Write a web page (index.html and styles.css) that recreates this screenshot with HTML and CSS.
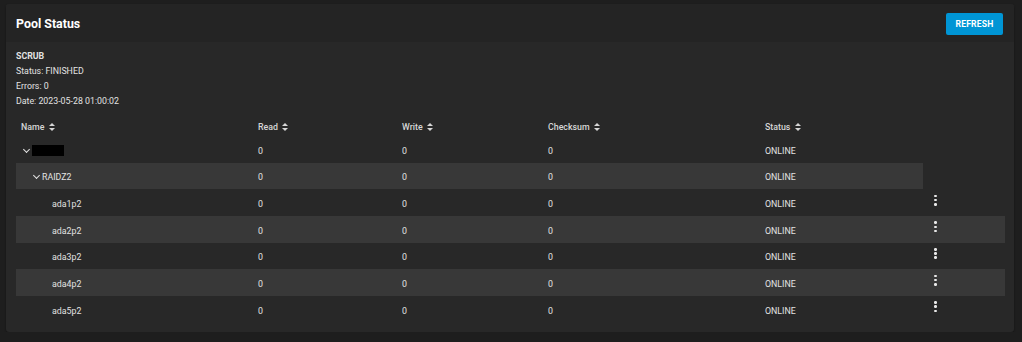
FILE: index.html
```html
<!DOCTYPE html>
<html>
<head>
<meta charset="utf-8">
<link rel="stylesheet" href="styles.css">
</head>
<body>
<div class="card">
  <div class="card-header">
    <h1 class="title">Pool Status</h1>
    <button class="btn">REFRESH</button>
  </div>
  <div class="card-body">
    <div class="scrub">
      <div class="scrub-title">SCRUB</div>
      <div>Status: FINISHED</div>
      <div>Errors: 0</div>
      <div>Date: 2023-05-28 01:00:02</div>
    </div>
    <table class="grid">
      <colgroup>
        <col class="c-name"><col class="c-read"><col class="c-write"><col class="c-sum"><col class="c-status"><col class="c-act">
      </colgroup>
      <thead>
        <tr>
          <th>Name <span class="sort"></span></th>
          <th>Read <span class="sort"></span></th>
          <th>Write <span class="sort"></span></th>
          <th>Checksum <span class="sort"></span></th>
          <th>Status <span class="sort"></span></th>
          <th></th>
        </tr>
      </thead>
      <tbody>
        <tr>
          <td><div class="name lvl0"><span class="chev"></span><span class="redact"></span></div></td>
          <td>0</td><td>0</td><td>0</td><td>ONLINE</td><td></td>
        </tr>
        <tr class="stripe">
          <td><div class="name lvl1"><span class="chev"></span>RAIDZ2</div></td>
          <td>0</td><td>0</td><td>0</td><td>ONLINE</td>
        </tr>
        <tr>
          <td><div class="name lvl2">ada1p2</div></td>
          <td>0</td><td>0</td><td>0</td><td>ONLINE</td><td><span class="dots"><i></i><i></i><i></i></span></td>
        </tr>
        <tr class="stripe">
          <td><div class="name lvl2">ada2p2</div></td>
          <td>0</td><td>0</td><td>0</td><td>ONLINE</td><td><span class="dots"><i></i><i></i><i></i></span></td>
        </tr>
        <tr>
          <td><div class="name lvl2">ada3p2</div></td>
          <td>0</td><td>0</td><td>0</td><td>ONLINE</td><td><span class="dots"><i></i><i></i><i></i></span></td>
        </tr>
        <tr class="stripe">
          <td><div class="name lvl2">ada4p2</div></td>
          <td>0</td><td>0</td><td>0</td><td>ONLINE</td><td><span class="dots"><i></i><i></i><i></i></span></td>
        </tr>
        <tr>
          <td><div class="name lvl2">ada5p2</div></td>
          <td>0</td><td>0</td><td>0</td><td>ONLINE</td><td><span class="dots"><i></i><i></i><i></i></span></td>
        </tr>
      </tbody>
    </table>
  </div>
</div>
</body>
</html>
```
FILE: styles.css
```css
html, body {
  margin: 0;
  padding: 0;
  background: #1e1e1e;
  font-family: Roboto, "Liberation Sans", sans-serif;
  color: #e2e2e2;
}
body {
  padding: 4px 8px 0 6px;
}
.card {
  background: #282828;
  border-radius: 3px;
  overflow: hidden;
  box-shadow: 0 1px 2px rgba(0,0,0,0.4);
}
.card-header {
  background: #242424;
  height: 38px;
  display: flex;
  align-items: center;
  justify-content: space-between;
  padding: 0 11px 0 10px;
}
.title {
  margin: 0;
  font-size: 12.4px;
  font-weight: 700;
  color: #ffffff;
  padding-top: 1px;
}
.btn {
  background: #0095d5;
  color: #fff;
  border: none;
  border-radius: 2px;
  width: 57px;
  height: 22px;
  font-family: Roboto, "Liberation Sans", sans-serif;
  font-size: 8.6px;
  font-weight: 700;
  letter-spacing: 0.2px;
  padding: 0;
  margin-top: 2px;
}
.card-body {
  padding: 7px 9px 9px 10px;
}
.scrub {
  font-size: 8.8px;
  line-height: 15px;
  color: #e2e2e2;
}
.scrub-title {
  font-weight: 700;
}
.grid {
  margin-top: 9px;
  width: 989px;
  table-layout: fixed;
  border-collapse: collapse;
  font-size: 8.8px;
}
.c-name { width: 237px; }
.c-read { width: 144px; }
.c-write { width: 146px; }
.c-sum { width: 217px; }
.c-status { width: 163px; }
.c-act { width: 82px; }
.grid th {
  height: 18px;
  padding: 0 0 0 5px;
  text-align: left;
  font-weight: 500;
  color: #d6d6d6;
  vertical-align: middle;
}
.grid td {
  height: 26.67px;
  box-sizing: border-box;
  padding: 3px 0 0 5px;
  vertical-align: middle;
  color: #e2e2e2;
}
.stripe td {
  background: #383838;
}
.sort {
  display: inline-block;
  position: relative;
  width: 6px;
  height: 8px;
  margin-left: 2px;
  vertical-align: -1px;
}
.sort::before, .sort::after {
  content: "";
  position: absolute;
  left: 0;
  border-left: 3px solid transparent;
  border-right: 3px solid transparent;
}
.sort::before {
  top: 0;
  border-bottom: 3.5px solid #d6d6d6;
}
.sort::after {
  bottom: 0;
  border-top: 3.5px solid #d6d6d6;
}
.name {
  display: flex;
  align-items: center;
}
.lvl0 { padding-left: 2px; }
.lvl1 { padding-left: 12px; }
.lvl2 { padding-left: 31px; }
.chev {
  width: 4px;
  height: 4px;
  border-right: 1.6px solid #e2e2e2;
  border-bottom: 1.6px solid #e2e2e2;
  transform: rotate(45deg);
  margin: -3px 3px 0 1px;
}
.redact {
  display: inline-block;
  width: 32px;
  height: 11px;
  background: #000;
}
.dots {
  display: flex;
  flex-direction: column;
  gap: 1.5px;
  width: 3px;
  margin-left: 6px;
  margin-top: -8px;
}
.dots i {
  display: block;
  width: 2.6px;
  height: 2.6px;
  border-radius: 50%;
  background: #e8e8e8;
}
```
